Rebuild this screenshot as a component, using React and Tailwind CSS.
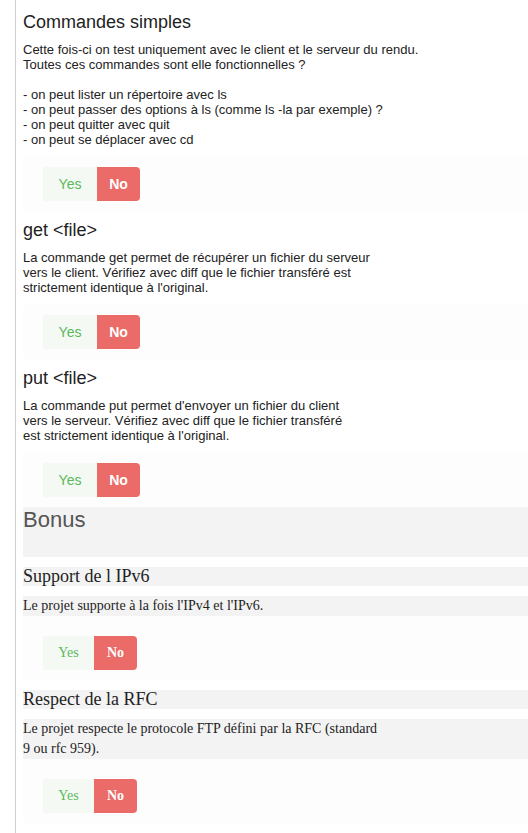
const sections = [
  {
    title: "Commandes simples",
    lines: [
      "Cette fois-ci on test uniquement avec le client et le serveur du rendu.",
      "Toutes ces commandes sont elle fonctionnelles ?",
      "",
      "- on peut lister un répertoire avec ls",
      "- on peut passer des options à ls (comme ls -la par exemple) ?",
      "- on peut quitter avec quit",
      "- on peut se déplacer avec cd",
    ],
  },
  {
    title: "get <file>",
    lines: [
      "La commande get permet de récupérer un fichier du serveur",
      "vers le client. Vérifiez avec diff que le fichier transféré est",
      "strictement identique à l'original.",
    ],
  },
  {
    title: "put <file>",
    lines: [
      "La commande put permet d'envoyer un fichier du client",
      "vers le serveur. Vérifiez avec diff que le fichier transféré",
      "est strictement identique à l'original.",
    ],
  },
];

const bonus = [
  {
    title: "Support de l IPv6",
    lines: ["Le projet supporte à la fois l'IPv4 et l'IPv6."],
  },
  {
    title: "Respect de la RFC",
    lines: [
      "Le projet respecte le protocole FTP défini par la RFC (standard",
      "9 ou rfc 959).",
    ],
  },
];

function YesNo({ serif }) {
  return (
    <div className="ml-[20px] flex h-[34px] text-[14px] leading-[34px]">
      <div
        className={`bg-[#f4f9f4] text-[#5cb85c] text-center ${serif ? "w-[51px]" : "w-[54px]"}`}
      >
        Yes
      </div>
      <div className="w-[43px] bg-[#ea6b67] text-white font-bold text-center rounded-r-[4px]">
        No
      </div>
    </div>
  );
}

function Lines({ lines }) {
  return lines.map((l, i) => (
    <span key={i}>
      {l === "" ? "\u00a0" : l}
      {i < lines.length - 1 && <br />}
    </span>
  ));
}

export default function App() {
  return (
    <div className="min-h-screen bg-white pl-[15px]">
      <div className="min-h-screen border-l border-[#cfcfcf] pl-[7px] pt-[12px] pb-[10px] text-[#222] font-['Liberation_Sans',Arial,sans-serif]">
        {/* Main part */}
        {sections.map((s, i) => (
          <div key={s.title} className={i > 0 ? "mt-[9px]" : ""}>
            <h3 className="text-[18px] leading-[20px]">{s.title}</h3>
            <p className="mt-[10px] text-[13px] leading-[15px]">
              <Lines lines={s.lines} />
            </p>
            <div className="mt-[10px] py-[10px] bg-[#fdfdfd]">
              <YesNo />
            </div>
          </div>
        ))}

        {/* Bonus */}
        <h2 className="h-[50px] bg-[#f3f3f3] text-[22px] leading-[24px] pt-[1px] text-[#555]">
          Bonus
        </h2>
        <div className="font-['Liberation_Serif','Times_New_Roman',serif]">
          {bonus.map((b) => (
            <div key={b.title} className="mt-[10px]">
              <h3 className="bg-[#f3f3f3] text-[18px] leading-[19px]">{b.title}</h3>
              <p className="mt-[10px] bg-[#f3f3f3] text-[14px] leading-[20px]">
                <Lines lines={b.lines} />
              </p>
              <div className="pt-[20px] pb-[10px] bg-[#fdfdfd]">
                <YesNo serif />
              </div>
            </div>
          ))}
        </div>
      </div>
    </div>
  );
}
